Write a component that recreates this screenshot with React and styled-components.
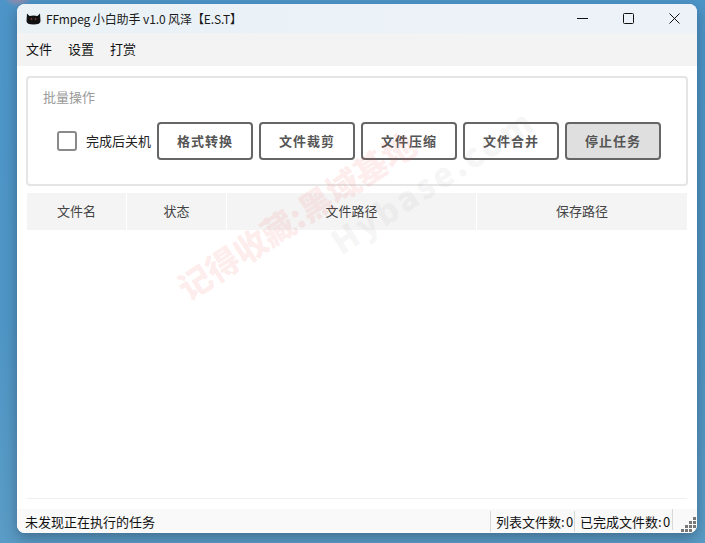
import React from 'react'
import styled, { createGlobalStyle } from 'styled-components'

const Global = createGlobalStyle`
  html, body { margin: 0; padding: 0; height: 543px; overflow: hidden; }
  body {
    font-family: "Noto Sans CJK SC", "Liberation Sans", sans-serif;
    background:
      radial-gradient(circle at 18px -8px, rgba(225,130,140,0.9) 0, rgba(225,130,140,0) 16px),
      linear-gradient(180deg, #4d95c8 0%, #4f96c6 60%, #5a9cc6 100%);
  }
`

const Desktop = styled.div`
  width: 705px;
  height: 543px;
  padding: 4px 8px 10px 17px;
  box-sizing: border-box;
`

const Win = styled.div`
  position: relative;
  display: flex;
  flex-direction: column;
  height: 100%;
  background: #fff;
  border-radius: 8px;
  overflow: hidden;
  box-shadow: 0 5px 14px rgba(30, 45, 65, 0.42);
`

const TitleBar = styled.div`
  display: flex;
  align-items: center;
  height: 29px;
  padding-left: 9px;
  background: linear-gradient(90deg, #eaf2f6, #edf2f9);
  font-size: 12px;
  color: #1a1a1a;
`

const Title = styled.span`
  margin-left: 5px;
  flex: 1;
  letter-spacing: -0.1px;
`

const WinBtn = styled.div`
  display: flex;
  align-items: center;
  justify-content: center;
  width: 46px;
  height: 29px;
`

const Menu = styled.div`
  display: flex;
  gap: 16px;
  align-items: center;
  box-sizing: border-box;
  height: 33px;
  padding: 0 0 2px 9px;
  background: #f3f3f3;
  font-size: 13px;
  color: #111;
`

const Body = styled.div`
  flex: 1;
  display: flex;
  flex-direction: column;
  padding: 10px 9px;
  min-height: 0;
`

const Group = styled.div`
  box-sizing: border-box;
  height: 110px;
  border: 2px solid #e5e5e5;
  border-radius: 4px;
  padding: 10px 0 0 15px;
`

const GroupTitle = styled.div`
  font-size: 13px;
  line-height: 18px;
  color: #9a9a9a;
`

const Row = styled.div`
  display: flex;
  align-items: center;
  margin-top: 16px;
  padding-left: 14px;
`

const Check = styled.div`
  box-sizing: border-box;
  flex: none;
  width: 20px;
  height: 20px;
  border: 2px solid #8a8a8a;
  border-radius: 3px;
`

const CheckLabel = styled.span`
  margin: 0 6px 0 9px;
  padding-bottom: 2px;
  font-size: 13px;
  color: #222;
  white-space: nowrap;
`

const Btn = styled.div`
  box-sizing: border-box;
  flex: none;
  width: 96px;
  height: 38px;
  margin-right: 6px;
  padding-bottom: 2px;
  display: flex;
  align-items: center;
  justify-content: center;
  border: 2px solid #666;
  border-radius: 4px;
  background: ${p => (p.$stop ? '#dfdfdf' : '#fff')};
  color: #555;
  font-size: 13px;
  font-weight: 700;
  letter-spacing: 1px;
`

const Table = styled.div`
  flex: 1;
  margin: 7px 0 0 1px;
  width: 660px;
  border-bottom: 1px solid #f0f0f0;
`

const Head = styled.div`
  display: grid;
  grid-template-columns: 100px 100px 250px 210px;
  height: 37px;
  background: #f4f4f4;
`

const HeadCell = styled.div`
  display: flex;
  align-items: center;
  justify-content: center;
  padding-bottom: 2px;
  font-size: 13px;
  color: #444;
  border-right: 1px solid #fff;
  &:last-child { border-right: 0; }
`

const Status = styled.div`
  display: flex;
  align-items: center;
  height: 24px;
  padding-left: 8px;
  background: #f9f9f9;
  font-size: 13px;
  color: #111;
`

const StatusMsg = styled.span`
  flex: 1;
`

const StatusCell = styled.span`
  box-sizing: border-box;
  height: 21px;
  line-height: 21px;
  padding-left: 5px;
  border-left: 1px solid #d8d8d8;
  white-space: nowrap;
  word-spacing: -1.5px;
  width: ${p => p.$w}px;
`

const GripBox = styled.div`
  box-sizing: border-box;
  width: 25px;
  height: 24px;
  padding: 0 1px 1px 0;
  display: flex;
  align-items: flex-end;
  justify-content: flex-end;
  background: linear-gradient(90deg, #d8d8d8 1px, transparent 1px) no-repeat left 0 / 1px 21px;
`

const Mark = styled.div`
  position: absolute;
  white-space: nowrap;
  font-weight: 900;
  transform: translate(-50%, -50%) rotate(-33deg);
  pointer-events: none;
  color: ${p => p.$c};
  font-size: ${p => p.$s}px;
  left: ${p => p.$x}px;
  top: ${p => p.$y}px;
  letter-spacing: ${p => p.$ls || 0}px;
`

const Logo = () => (
  <svg width="15" height="12" viewBox="0 0 15 12">
    <path d="M1 0.5 L3.5 3 Q7.5 1.8 11.5 3 L14 0.5 L14.5 8 Q14.5 11.5 7.5 11.5 Q0.5 11.5 0.5 8 Z" fill="#111" />
    <circle cx="5.5" cy="6" r="0.9" fill="#7a3a2a" />
    <circle cx="9.5" cy="6" r="0.9" fill="#7a3a2a" />
  </svg>
)

const dots = [[12, 0], [8, 4], [12, 4], [4, 8], [8, 8], [12, 8], [0, 12], [4, 12], [8, 12]]

const Grip = () => (
  <svg width="15" height="15" viewBox="0 0 15 15">
    {dots.map(([x, y]) => (
      <rect key={`${x}-${y}`} x={x} y={y} width="3" height="3" fill="#777" />
    ))}
  </svg>
)

const buttons = ['格式转换', '文件裁剪', '文件压缩', '文件合并']
const cols = ['文件名', '状态', '文件路径', '保存路径']

export default function App() {
  return (
    <Desktop>
      <Global />
      <Win>
        <TitleBar>
          <Logo />
          <Title>FFmpeg 小白助手 v1.0 风泽【E.S.T】</Title>
          <WinBtn>
            <svg width="11" height="11" viewBox="0 0 11 11"><path d="M0 5.5H11" stroke="#111" /></svg>
          </WinBtn>
          <WinBtn>
            <svg width="11" height="11" viewBox="0 0 11 11"><rect x="0.5" y="0.5" width="10" height="10" rx="1" fill="none" stroke="#111" /></svg>
          </WinBtn>
          <WinBtn>
            <svg width="11" height="11" viewBox="0 0 11 11"><path d="M0.5 0.5L10.5 10.5M10.5 0.5L0.5 10.5" stroke="#111" /></svg>
          </WinBtn>
        </TitleBar>
        <Menu>
          <span>文件</span>
          <span>设置</span>
          <span>打赏</span>
        </Menu>
        <Body>
          <Group>
            <GroupTitle>批量操作</GroupTitle>
            <Row>
              <Check />
              <CheckLabel>完成后关机</CheckLabel>
              {buttons.map(b => <Btn key={b}>{b}</Btn>)}
              <Btn $stop>停止任务</Btn>
            </Row>
          </Group>
          <Table>
            <Head>
              {cols.map(c => <HeadCell key={c}>{c}</HeadCell>)}
            </Head>
          </Table>
        </Body>
        <Status>
          <StatusMsg>未发现正在执行的任务</StatusMsg>
          <StatusCell $w={84}>列表文件数: 0</StatusCell>
          <StatusCell $w={98}>已完成文件数: 0</StatusCell>
          <GripBox><Grip /></GripBox>
        </Status>
        <Mark $c="rgba(240,70,60,0.1)" $s={33} $x={279} $y={211}>记得收藏:黑域基地</Mark>
        <Mark $c="rgba(120,120,120,0.08)" $s={33} $x={415} $y={176} $ls={3}>Hybase.com</Mark>
      </Win>
    </Desktop>
  )
}
